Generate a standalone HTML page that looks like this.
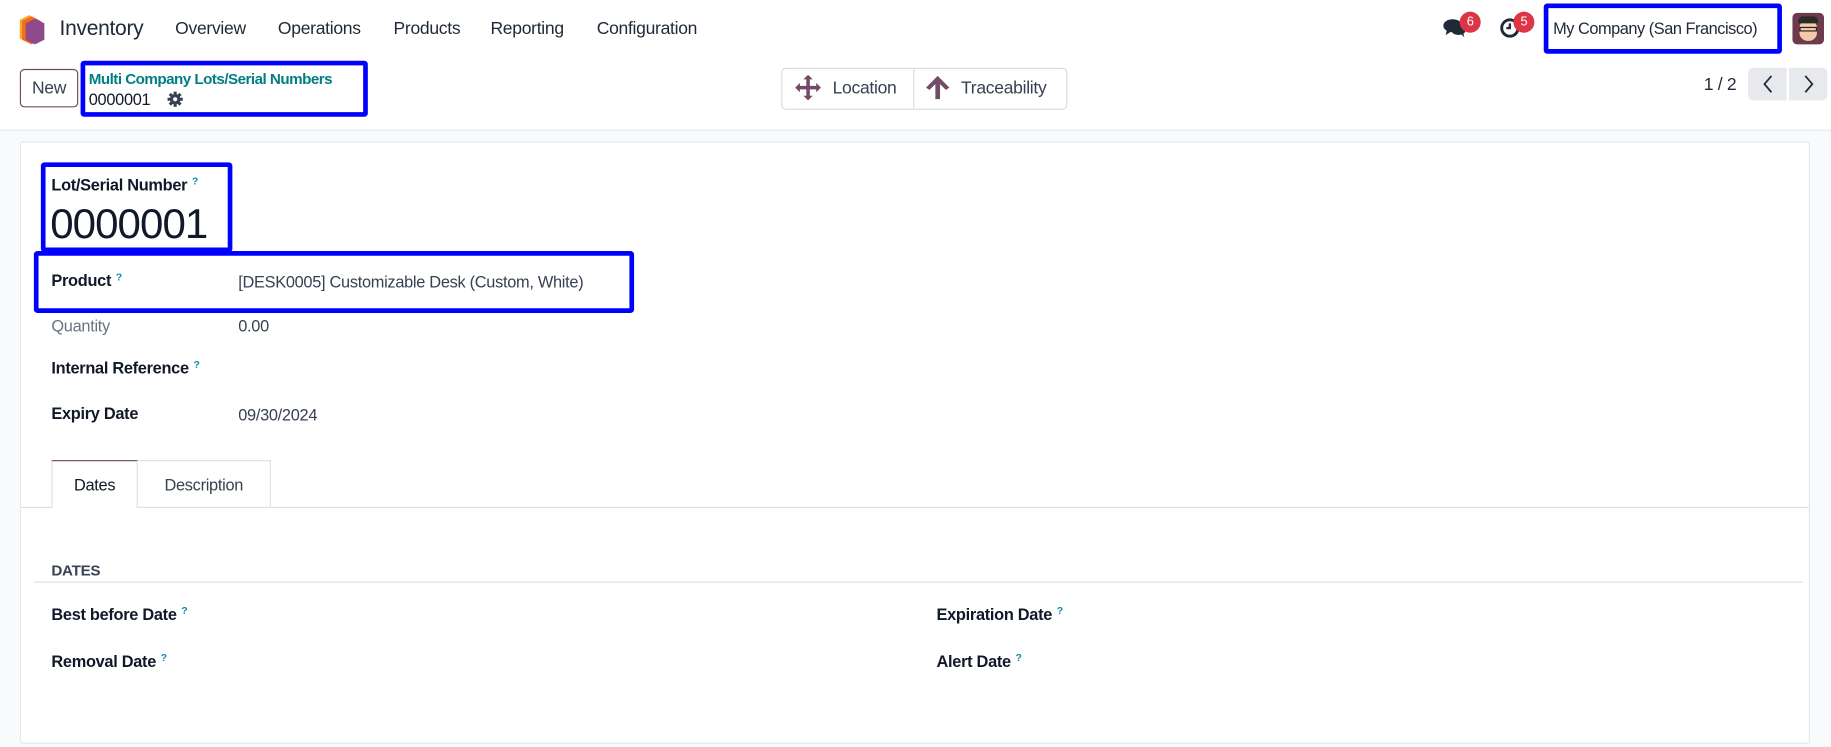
<!DOCTYPE html>
<html><head><meta charset="utf-8"><style>
html,body{margin:0;padding:0;width:1831px;height:747px;overflow:hidden;background:#f9fafb;}
#w{position:absolute;left:0;top:0;width:1568px;height:640px;transform:scale(1.16773);transform-origin:0 0;font-family:"Liberation Sans",sans-serif;color:#374151;font-size:14px;background:#f9fafb;letter-spacing:-0.25px;}
.a{position:absolute;white-space:nowrap;}
.b{font-weight:bold;color:#111827;}
.q{color:#0d8fa8;font-size:9px;font-weight:bold;vertical-align:top;margin-left:4px;}
.box{position:absolute;border:4px solid #0000ff;border-radius:3px;}
</style></head><body><div id="w">
<div class="a" style="left:0;top:0;width:1568px;height:48px;background:#fff;"></div>
<div class="a" style="left:0;top:48px;width:1568px;height:63px;background:#fff;border-bottom:1px solid #e5e7eb;"></div>
<svg class="a" style="left:16px;top:13px" width="24" height="25" viewBox="0 0 24 25"><polygon points="9,0 17,4 17,20 9,24 1,20 1,4" fill="#f5a623"/><polygon points="11,1 19,5 19,21 11,25 3,21 3,5" fill="#f26b21"/><polygon points="14,3 22,7 22,21 14,25 6,21 6,7" fill="#8f4a8a"/></svg>
<div class="a" style="left:51px;top:14px;font-size:18px;color:#1f2937;">Inventory</div>
<div class="a" style="left:150px;top:16px;font-size:15px;color:#1f2937;">Overview</div>
<div class="a" style="left:238px;top:16px;font-size:15px;color:#1f2937;">Operations</div>
<div class="a" style="left:337px;top:16px;font-size:15px;color:#1f2937;">Products</div>
<div class="a" style="left:420px;top:16px;font-size:15px;color:#1f2937;">Reporting</div>
<div class="a" style="left:511px;top:16px;font-size:15px;color:#1f2937;">Configuration</div>
<svg class="a" style="left:1236px;top:15px" width="20" height="18" viewBox="0 0 20 18"><ellipse cx="8" cy="7" rx="8" ry="5.5" fill="#1f2937"/><path d="M3 11 L2 15 L7 12Z" fill="#1f2937"/><ellipse cx="13" cy="11" rx="6" ry="4" fill="#1f2937"/><path d="M15 14 L18 17 L17 13Z" fill="#1f2937"/></svg>
<div class="a" style="left:1250px;top:10px;width:18px;height:18px;border-radius:9px;background:#dc3545;color:#fff;font-size:11px;text-align:center;line-height:18px;">6</div>
<svg class="a" style="left:1284px;top:15px" width="18" height="18" viewBox="0 0 18 18"><circle cx="9" cy="9" r="7" fill="none" stroke="#1f2937" stroke-width="2.5"/><path d="M9 5V9H6" stroke="#1f2937" stroke-width="2" fill="none"/></svg>
<div class="a" style="left:1296px;top:10px;width:18px;height:18px;border-radius:9px;background:#dc3545;color:#fff;font-size:11px;text-align:center;line-height:18px;">5</div>
<div class="a" style="left:1330px;top:16px;font-size:14px;letter-spacing:-0.4px;color:#1f2937;">My Company (San Francisco)</div>
<div class="box" style="left:1322px;top:3px;width:196px;height:35px;"></div>
<div class="a" style="left:1535px;top:11px;width:27px;height:27px;border-radius:4px;background:#6d3a4e;overflow:hidden;"><div style="position:absolute;left:6px;top:6px;width:15px;height:18px;border-radius:7px;background:#f4c9a8;"></div><div style="position:absolute;left:5px;top:3px;width:17px;height:6px;border-radius:4px 4px 0 0;background:#2a2a2a;"></div><div style="position:absolute;left:6px;top:12px;width:15px;height:4px;border:1px solid #222;box-sizing:border-box;"></div></div>

<div class="a" style="left:17px;top:59px;width:50px;height:33px;border:1px solid #714b67;border-radius:4px;box-sizing:border-box;text-align:center;line-height:31px;font-size:15px;color:#374151;">New</div>
<div class="a" style="left:76px;top:60px;font-size:13px;letter-spacing:-0.45px;color:#017e84;font-weight:bold;">Multi Company Lots/Serial Numbers</div>
<div class="a" style="left:76px;top:77px;font-size:14px;color:#111827;">0000001</div>
<svg class="a" style="left:143px;top:78px" width="14" height="14" viewBox="0 0 14 14"><g fill="#374151"><circle cx="7" cy="7" r="4.5"/><rect x="5.7" y="0.5" width="2.6" height="13"/><rect x="0.5" y="5.7" width="13" height="2.6"/><rect x="5.7" y="0.5" width="2.6" height="13" transform="rotate(45 7 7)"/><rect x="5.7" y="0.5" width="2.6" height="13" transform="rotate(-45 7 7)"/></g><circle cx="7" cy="7" r="1.8" fill="#fff"/></svg>
<div class="box" style="left:69px;top:52px;width:238px;height:40px;"></div>

<div class="a" style="left:669px;top:58px;width:243px;height:34px;border:1px solid #d8dadd;border-radius:4px;background:#fff;"></div>
<div class="a" style="left:782px;top:59px;width:1px;height:33px;background:#d8dadd;"></div>
<svg class="a" style="left:681px;top:64px" width="22" height="22" viewBox="0 0 22 22" fill="#714b67"><path d="M11 0L15 4H12.5V9.5H18V7L22 11L18 15V12.5H12.5V18H15L11 22L7 18H9.5V12.5H4V15L0 11L4 7V9.5H9.5V4H7Z"/></svg>
<div class="a" style="left:713px;top:67px;font-size:15px;">Location</div>
<svg class="a" style="left:792px;top:65px" width="22" height="20" viewBox="0 0 22 20" fill="#714b67"><path d="M11 0L21 10L18 12L13 7V20H9V7L4 12L1 10Z"/></svg>
<div class="a" style="left:823px;top:67px;font-size:15px;">Traceability</div>

<div class="a" style="left:1459px;top:64px;font-size:15px;color:#1f2937;">1 / 2</div>
<div class="a" style="left:1497px;top:58px;width:33px;height:28px;background:#e7e9ed;border-radius:4px 0 0 4px;"></div>
<div class="a" style="left:1532px;top:58px;width:33px;height:28px;background:#e7e9ed;border-radius:0 4px 4px 0;"></div>
<svg class="a" style="left:1508px;top:63px" width="12" height="18" viewBox="0 0 12 18"><path d="M9 2L3 9L9 16" stroke="#1f2937" stroke-width="1.5" fill="none"/></svg>
<svg class="a" style="left:1543px;top:63px" width="12" height="18" viewBox="0 0 12 18"><path d="M3 2L9 9L3 16" stroke="#1f2937" stroke-width="1.5" fill="none"/></svg>

<div class="a" style="left:17px;top:121px;width:1533px;height:516px;background:#fff;border:1px solid #e5e7eb;border-radius:3px;box-sizing:border-box;"></div>
<div class="a b" style="left:44px;top:150px;">Lot/Serial Number<span class="q">?</span></div>
<div class="a" style="left:43px;top:171px;font-size:36px;letter-spacing:-0.8px;color:#111827;">0000001</div>
<div class="box" style="left:35px;top:139px;width:156px;height:69px;"></div>

<div class="a b" style="left:44px;top:232px;">Product<span class="q">?</span></div>
<div class="a" style="left:204px;top:233px;">[DESK0005] Customizable Desk (Custom, White)</div>
<div class="box" style="left:29px;top:215px;width:506px;height:45px;"></div>
<div class="a" style="left:44px;top:271px;color:#6b7280;">Quantity</div>
<div class="a" style="left:204px;top:271px;">0.00</div>
<div class="a b" style="left:44px;top:307px;">Internal Reference<span class="q">?</span></div>
<div class="a b" style="left:44px;top:346px;">Expiry Date</div>
<div class="a" style="left:204px;top:347px;">09/30/2024</div>

<div class="a" style="left:18px;top:434px;width:1531px;height:1px;background:#dee2e6;"></div>
<div class="a" style="left:44px;top:394px;width:74px;height:41px;background:#fff;border:1px solid #dee2e6;border-top:1px solid #714b67;border-bottom:none;box-sizing:border-box;text-align:center;line-height:40px;color:#111827;">Dates</div>
<div class="a" style="left:118px;top:394px;width:114px;height:40px;border:1px solid #dee2e6;border-left:none;border-bottom:none;box-sizing:border-box;text-align:center;line-height:40px;">Description</div>

<div class="a b" style="left:44px;top:481px;font-size:13px;color:#374151;">DATES</div>
<div class="a" style="left:29px;top:498px;width:1515px;height:1px;background:#dee2e6;"></div>
<div class="a b" style="left:44px;top:518px;">Best before Date<span class="q">?</span></div>
<div class="a b" style="left:44px;top:558px;">Removal Date<span class="q">?</span></div>
<div class="a b" style="left:802px;top:518px;">Expiration Date<span class="q">?</span></div>
<div class="a b" style="left:802px;top:558px;">Alert Date<span class="q">?</span></div>
</div></body></html>
